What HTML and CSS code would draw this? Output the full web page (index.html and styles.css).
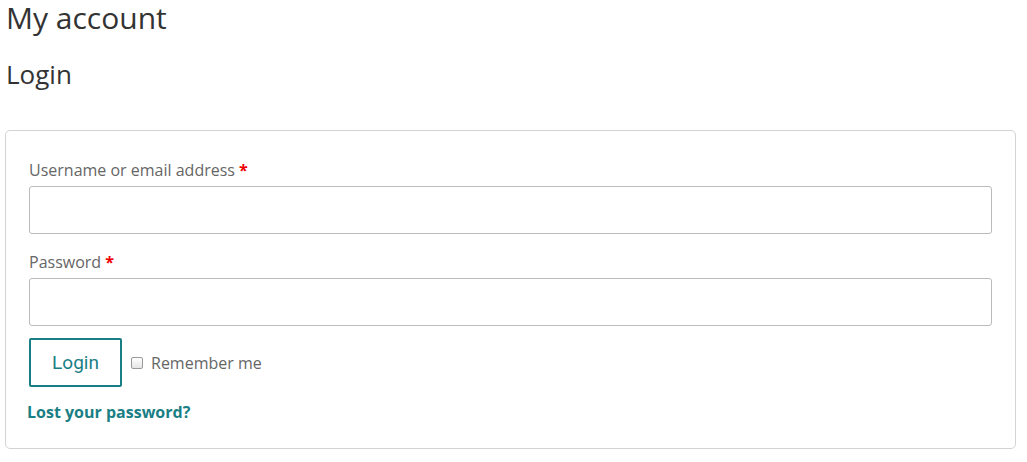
FILE: index.html
```html
<!DOCTYPE html>
<html lang="en">
<head>
<meta charset="utf-8">
<title>My account</title>
<link rel="stylesheet" href="styles.css">
</head>
<body>
<main class="page">
  <h1 class="page-title">My account</h1>
  <h2 class="section-title">Login</h2>
  <form class="login-box">
    <div class="field">
      <label class="field-label" for="username">Username or email address <span class="req">*</span></label>
      <input class="field-input" id="username" type="text">
    </div>
    <div class="field">
      <label class="field-label" for="password">Password <span class="req">*</span></label>
      <input class="field-input" id="password" type="password">
    </div>
    <div class="actions">
      <button class="btn" type="button">Login</button>
      <label class="remember"><span class="check"></span>Remember me</label>
    </div>
    <a class="lost" href="#">Lost your password?</a>
  </form>
</main>
</body>
</html>
```

FILE: styles.css
```css
* { box-sizing: border-box; }
body {
  margin: 0;
  background: #fff;
  font-family: "Open Sans", sans-serif;
  color: #333;
}
.page {
  width: 1011px;
  margin-left: 5px;
  padding-top: 1px;
}
.page-title {
  margin: 0;
  padding-left: 1px;
  font-size: 30px;
  font-weight: 400;
  line-height: 34px;
  color: #333;
}
.section-title {
  margin: 23px 0 0;
  padding-left: 1px;
  font-size: 26px;
  font-weight: 400;
  line-height: 32px;
  color: #333;
}
.login-box {
  margin-top: 40px;
  border: 1px solid #d3d3d3;
  border-radius: 5px;
  padding: 20px 23px 24px;
  height: 319px;
}
.field {
  display: flex;
  flex-direction: column;
  margin-bottom: 9px;
}
.field-label {
  font-size: 16px;
  line-height: 38px;
  color: #666;
  display: block;
  margin-bottom: -3px;
}
.req {
  color: #e00;
  font-weight: 700;
}
.field-input {
  height: 48px;
  width: 963px;
  border: 1px solid #bbb;
  border-radius: 3px;
  background: #fff;
}
.actions {
  display: flex;
  align-items: center;
  gap: 9px;
  margin-top: 12px;
}
.btn {
  width: 93px;
  height: 49px;
  border: 2px solid #1a7f85;
  border-radius: 2px;
  background: #fff;
  color: #1a7f85;
  font-family: Roboto, "Liberation Sans", sans-serif;
  font-size: 19px;
  padding: 0;
}
.remember {
  display: flex;
  align-items: center;
  gap: 8px;
  font-size: 16px;
  color: #666;
}
.check {
  width: 12px;
  height: 12px;
  border: 1px solid #999;
  border-radius: 2px;
  background: linear-gradient(#fff, #e6e6e6);
}
.lost {
  display: block;
  margin-top: 15px;
  margin-left: -2px;
  font-size: 16px;
  font-weight: 700;
  color: #1a7f85;
  text-decoration: none;
  line-height: 20px;
}
```
